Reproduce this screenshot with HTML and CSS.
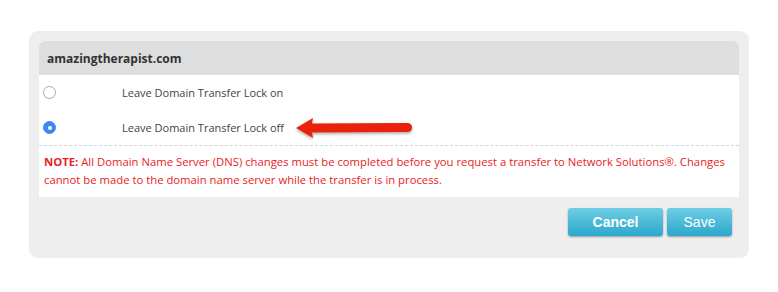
FILE: index.html
```html
<!DOCTYPE html>
<html lang="en">
<head>
    <meta charset="UTF-8">
    <title>Domain Transfer Lock</title>
    <link rel="stylesheet" href="styles.css">
</head>
<body>
    <div class="panel">
        <div class="box">
            <div class="box-header">amazingtherapist.com</div>
            <label class="option">
                <span class="radio"></span>
                <span class="option-text">Leave Domain Transfer Lock on</span>
            </label>
            <label class="option option-last">
                <span class="radio checked"></span>
                <span class="option-text">Leave Domain Transfer Lock off</span>
                <svg class="arrow" width="130" height="30" viewBox="0 0 130 30">
                    <defs>
                        <filter id="sh" x="-10%" y="-30%" width="120%" height="180%">
                            <feDropShadow dx="0" dy="1.5" stdDeviation="1.5" flood-color="#000" flood-opacity="0.35"/>
                        </filter>
                    </defs>
                    <path d="M3 15 L20 5 L19 10.5 L114 10 Q119 10 119 14.5 Q119 19 114 19 L19 19.5 L20 25 Z" fill="#e8210b" filter="url(#sh)"/>
                </svg>
            </label>
            <p class="note"><b>NOTE:</b> All Domain Name Server (DNS) changes must be completed before you request a transfer to Network Solutions®. Changes cannot be made to the domain name server while the transfer is in process.</p>
        </div>
        <div class="actions">
            <button class="btn btn-cancel">Cancel</button>
            <button class="btn btn-save">Save</button>
        </div>
    </div>
</body>
</html>
```

FILE: styles.css
```css
body {
    margin: 0;
    background-color: #fff;
    font-family: "Open Sans", Arial, sans-serif;
}
.panel {
    margin: 31px 0 0 29px;
    width: 700px;
    padding: 10px;
    background-color: #eeeeee;
    border-radius: 9px;
}
.box {
    background-color: #fff;
    border-radius: 6px 6px 0 0;
}
.box-header {
    height: 34px;
    line-height: 35px;
    padding-left: 8px;
    background-color: #dedede;
    border-radius: 6px 6px 0 0;
    font-size: 12px;
    font-weight: bold;
    color: #333;
}
.option {
    display: flex;
    align-items: center;
    height: 35px;
    position: relative;
    font-size: 11px;
    color: #444;
}
.option-last {
    border-bottom: 1px dashed #d4d4d4;
}
.radio {
    width: 11px;
    height: 11px;
    margin-left: 4px;
    border: 1px solid #a8a8a8;
    border-radius: 50%;
    background-color: #fff;
    box-sizing: content-box;
    position: relative;
}
.radio.checked {
    border-color: #3d87f5;
    background-color: #3d87f5;
}
.radio.checked::after {
    content: "";
    position: absolute;
    left: 4px;
    top: 4px;
    width: 4px;
    height: 4px;
    border-radius: 50%;
    background-color: #fff;
}
.option-text {
    margin-left: 66px;
}
.arrow {
    position: absolute;
    left: 254px;
    top: 3px;
}
.note {
    margin: 0;
    padding: 7px 5px 8px 5px;
    font-size: 11.3px;
    line-height: 18px;
    color: #ea1b24;
}
.actions {
    display: flex;
    justify-content: flex-end;
    gap: 4px;
    padding: 11px 7px 12px 0;
}
.btn {
    height: 28px;
    border: none;
    border-radius: 3px;
    background: linear-gradient(#6fcde4, #2aa8cb);
    box-shadow: 0 1px 2px rgba(0, 0, 0, 0.35);
    color: #fff;
    font-family: "Liberation Sans", Arial, sans-serif;
    font-size: 14px;
    cursor: pointer;
}
.btn-cancel {
    width: 95px;
    font-weight: bold;
}
.btn-save {
    width: 65px;
}
```
